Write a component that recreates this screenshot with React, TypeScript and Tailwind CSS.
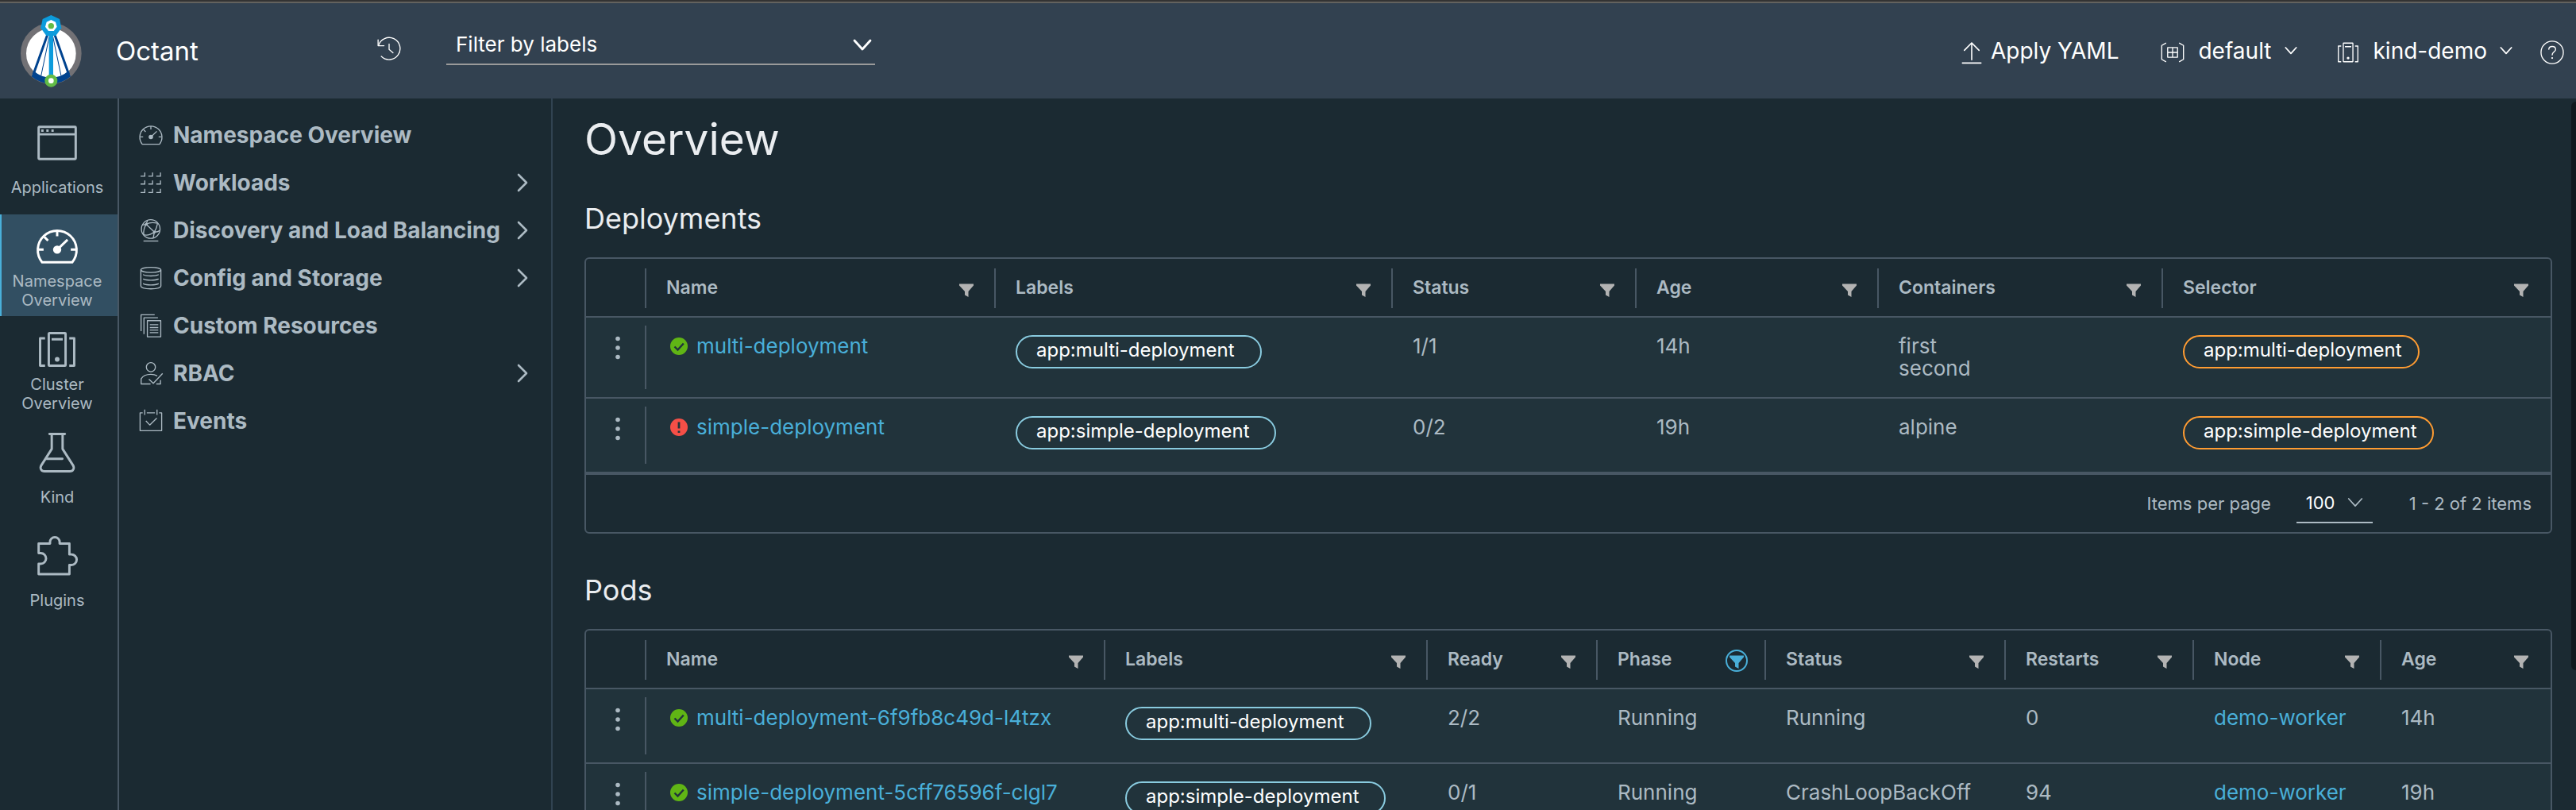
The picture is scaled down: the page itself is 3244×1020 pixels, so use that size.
import React, { type ReactNode } from "react";

type IconProps = { className?: string; stroke?: number };

function Icon({ className = "size-8", stroke = 1.5, children }: IconProps & { children: ReactNode }) {
  return (
    <svg
      viewBox="0 0 36 36"
      className={className}
      fill="none"
      stroke="currentColor"
      strokeWidth={stroke}
      strokeLinejoin="round"
      aria-hidden="true"
    >
      {children}
    </svg>
  );
}

const ApplicationIcon = (p: IconProps) => (
  <Icon {...p}>
    <rect x="3" y="5" width="30" height="26" rx="0.6" />
    <path d="M3 11H33" />
    <path d="M5.1 8h1.9M9.2 8h1.9M13.3 8h1.9" />
  </Icon>
);

const DashboardIcon = (p: IconProps) => (
  <Icon {...p}>
    <path d="M5.8 31H30.2A15.7 15.7 0 1 0 5.8 31Z" />
    <path d="M18 5.5V10M2.6 20.7H7M29 20.7H33.4M7.6 10.5L10.6 13.5M18 20.8L26.4 12.8" />
    <circle cx="18" cy="20.8" r="2.4" fill="currentColor" />
  </Icon>
);

const ClusterIcon = (p: IconProps) => (
  <Icon {...p}>
    <rect x="11.2" y="4.8" width="13.6" height="26.4" rx="0.5" />
    <path d="M13.5 9.8H22.5M8.2 9H4.2V31.2H8.2M27.8 9H31.8V31.2H27.8" />
    <circle cx="18" cy="26" r="1.9" fill="currentColor" stroke="none" />
  </Icon>
);

const FlaskIcon = (p: IconProps) => (
  <Icon {...p}>
    <path d="M11.8 2.9H24.2" strokeLinecap="round" />
    <path d="M13.6 3V15L5.2 28.2C3.8 30.6 5 33.1 7.8 33.1H28.2C31 33.1 32.2 30.6 30.8 28.2L22.4 15V3" />
    <path d="M9.2 23H22.2" strokeLinecap="round" />
  </Icon>
);

const PluginIcon = (p: IconProps) => (
  <Icon {...p}>
    <path d="M3 8H12.2V6.8A3.9 3.9 0 0 1 20 6.8V8H27.9V16.8H29.5A4.3 4.3 0 0 1 29.5 25.4H27.9V32.8H3V24.4H4.7A4.3 4.3 0 0 0 4.7 15.8H3Z" />
  </Icon>
);

const WorkloadsIcon = (p: IconProps) => (
  <Icon {...p}>
    {[8.9, 20, 31.9].map((y) =>
      [3.4, 14.4, 25.6].map((x) => <path key={`${x}-${y}`} d={`M${x} ${y}h6v-5.2`} strokeLinejoin="miter" />),
    )}
  </Icon>
);

const NetworkIcon = (p: IconProps) => (
  <Icon {...p}>
    <circle cx="17.8" cy="16.2" r="13.2" />
    <path d="M7.5 33.2H28.5" />
    <path d="M11.5 9.5C16 6.6 21.5 6.6 27.5 8M11.5 9.5C8.5 14 7.2 18 7.8 24.4M11.5 9.5L23 20.5M27.5 8C26.6 13 25 17.3 23 20.5M23 20.5C18 24 12 25.4 7.8 24.4M23 20.5C25.4 20.6 28.4 20 30.5 18.4M23 20.5L21.4 28.6M6 10.5L11.5 9.5L13 4.4" />
    <circle cx="11.5" cy="9.5" r="1.3" fill="currentColor" />
    <circle cx="23" cy="20.5" r="1.3" fill="currentColor" />
  </Icon>
);

const StorageIcon = (p: IconProps) => (
  <Icon {...p}>
    <ellipse cx="18" cy="6.6" rx="14.2" ry="3.7" />
    <path d="M3.8 6.6V29.6C3.8 31.8 10 33.5 18 33.5S32.2 31.8 32.2 29.6V6.6" />
    <path d="M7.5 13.5C10 14.7 13.8 15.2 18 15.2S26 14.7 28.5 13.5M7.5 19.6C10 20.8 13.8 21.3 18 21.3S26 20.8 28.5 19.6M7.5 26.2C10 27.4 13.8 27.9 18 27.9S26 27.4 28.5 26.2" strokeLinecap="round" />
  </Icon>
);

const ResourcesIcon = (p: IconProps) => (
  <Icon {...p}>
    <rect x="13" y="11" width="19" height="22.8" />
    <path d="M8.2 30V6.8H28M4.1 26V2.6H23.4M16.5 16.8H28.5M16.5 20.8H28.5M16.5 24.4H28.5M16.5 28H28.5" />
  </Icon>
);

const AssignUserIcon = (p: IconProps) => (
  <Icon {...p}>
    <circle cx="18" cy="9.4" r="6.4" />
    <path d="M17.5 33.2H4.2V26C6.6 21.6 12 19.6 18 19.6C21.6 19.6 24.6 20.4 27 21.8M25.6 33.2H31.6V27.5" />
    <path d="M15.2 26.4L21.4 32.4L34.6 18.2" />
  </Icon>
);

const EventIcon = (p: IconProps) => (
  <Icon {...p}>
    <path d="M6.4 6.7H2.7V31.9H33.3V6.7H29.6M12.2 6.7H23.8M9.3 2V9.6M26.7 2V9.6M10.9 18L16.4 23.8L26.4 14" />
  </Icon>
);

const HistoryIcon = (p: IconProps) => (
  <Icon {...p}>
    <path d="M7 28.2A15.6 15.6 0 1 0 3 12.8" strokeLinecap="round" />
    <path d="M2.4 4.6V13H10.8M18 10.6V18.4L23.6 23" strokeLinecap="round" />
  </Icon>
);

const UploadIcon = (p: IconProps) => (
  <Icon {...p}>
    <path d="M18 28.5V4.5M7.6 15L18 4.5L28.4 15M4.8 33H31.2" strokeLinecap="round" />
  </Icon>
);

const NamespaceIcon = (p: IconProps) => (
  <Icon {...p}>
    <path d="M8.8 4.6L2.6 8.2V27.8L8.8 31.4M27.2 4.6L33.4 8.2V27.8L27.2 31.4" />
    <path d="M11 11.2H25V24.8H11ZM18 11.2V24.8M11 18H25" />
  </Icon>
);

const HelpIcon = (p: IconProps) => (
  <Icon {...p}>
    <circle cx="18" cy="18" r="15.8" />
    <path d="M13.2 13.6C13.4 10.9 15.3 9.6 18 9.6C20.9 9.6 22.9 11.2 22.9 13.7C22.9 17.2 18 17.4 18 21.6" strokeLinecap="round" />
    <circle cx="18" cy="26" r="1.3" fill="currentColor" stroke="none" />
  </Icon>
);

function ChevronRight() {
  return (
    <svg viewBox="0 0 14 24" className="h-6 w-3.5" fill="none" stroke="currentColor" strokeWidth="2.6" strokeLinecap="round" strokeLinejoin="round" aria-hidden="true">
      <path d="M2 2L12 12L2 22" />
    </svg>
  );
}

function ChevronDown({ className, stroke = 2 }: { className: string; stroke?: number }) {
  return (
    <svg viewBox="0 0 24 24" className={className} fill="none" stroke="currentColor" strokeWidth={stroke} strokeLinecap="round" strokeLinejoin="round" aria-hidden="true">
      <path d="M2 6L12 17L22 6" />
    </svg>
  );
}

function FilterIcon({ active }: { active?: boolean }) {
  return (
    <svg viewBox="0 0 28 28" className={active ? "size-7 text-[#49afd9]" : "size-7 text-[#b3b3b3]"} aria-hidden="true">
      {active && <circle cx="14" cy="14" r="13" fill="none" stroke="currentColor" strokeWidth="2" />}
      <path d="M5 7.5H23V9.5L16.5 17V24L12 21.5V17L5 9.5Z" fill="currentColor" />
    </svg>
  );
}

function StatusIcon({ ok }: { ok: boolean }) {
  return (
    <svg viewBox="0 0 28 28" className="size-7 shrink-0" role="img" aria-label={ok ? "Healthy" : "Error"}>
      <circle cx="14" cy="14" r="11" fill={ok ? "#60b515" : "#f54f47"} />
      {ok ? (
        <path d="M8.5 14.5L12.5 18.5L19.8 10.5" fill="none" stroke="#21333b" strokeWidth="2.4" />
      ) : (
        <path d="M14 7.5V15.5M14 18.4V21" fill="none" stroke="#21333b" strokeWidth="2.8" />
      )}
    </svg>
  );
}

function Logo() {
  return (
    <svg viewBox="72 50 240 282" className="h-[94px] w-20" role="img" aria-label="Octant logo">
      <circle cx="193" cy="201" r="104.5" fill="#fff" stroke="#727175" strokeWidth="21" />
      <path d="M119 288A115 115 0 0 0 267 288L257 268A96 96 0 0 1 129 268Z" fill="#00438f" />
      <path d="M180 128L126 280M206 128L260 280" stroke="#00438f" strokeWidth="9" />
      <path d="M186 138L155 286M200 138L231 286" stroke="#00438f" strokeWidth="3" />
      <path d="M193 130V290" stroke="#0c9bdc" strokeWidth="16" />
      <path d="M193 56L225 71L232 105L211 134H175L154 105L161 71Z" fill="#0c9bdc" />
      <path d="M193 74L210 82L215 100L203 116H183L171 100L176 82Z" fill="#fff" />
      <circle cx="193" cy="97" r="11" fill="#62bb46" />
      <circle cx="193" cy="304" r="17" fill="#fff" stroke="#62bb46" strokeWidth="14" />
    </svg>
  );
}

const railItems = [
  { label: "Applications", icon: ApplicationIcon },
  { label: "Namespace Overview", icon: DashboardIcon, active: true },
  { label: "Cluster Overview", icon: ClusterIcon },
  { label: "Kind", icon: FlaskIcon },
  { label: "Plugins", icon: PluginIcon },
];

const navItems = [
  { label: "Namespace Overview", icon: DashboardIcon },
  { label: "Workloads", icon: WorkloadsIcon, more: true },
  { label: "Discovery and Load Balancing", icon: NetworkIcon, more: true },
  { label: "Config and Storage", icon: StorageIcon, more: true },
  { label: "Custom Resources", icon: ResourcesIcon },
  { label: "RBAC", icon: AssignUserIcon, more: true },
  { label: "Events", icon: EventIcon },
];

function Header() {
  return (
    <header className="flex h-[124px] shrink-0 items-center border-t-2 border-[#333333] bg-[#324150] text-white">
      <div className="flex h-full w-full items-center border-t-2 border-[#63625e]">
        <div className="flex w-[562px] shrink-0 items-center pr-14 pl-6">
          <Logo />
          <span className="ml-[42px] text-[33px] leading-10">Octant</span>
          <button type="button" aria-label="History" className="mb-1 ml-auto">
            <HistoryIcon />
          </button>
        </div>
        <div className="mb-4 flex h-[52px] w-[540px] items-center border-b-2 border-[#9a9a9a] pr-1 pl-3">
          <input
            type="text"
            aria-label="Filter by labels"
            placeholder="Filter by labels"
            className="h-full min-w-0 flex-1 bg-transparent text-[26px] outline-none placeholder:text-white placeholder:opacity-100"
          />
          <button type="button" aria-label="Show label filters" className="mt-1">
            <ChevronDown className="size-6" stroke={2.8} />
          </button>
        </div>
        <div className="ml-auto flex items-center gap-12 pr-3.5 text-[28px] leading-10">
          <button type="button" className="mr-1 flex items-center gap-2">
            <UploadIcon className="mt-1 size-8" stroke={1.8} />
            Apply YAML
          </button>
          <button type="button" aria-haspopup="listbox" className="flex items-center gap-4">
            <NamespaceIcon className="mt-1 size-8" />
            default
            <ChevronDown className="size-4" stroke={2.6} />
          </button>
          <div className="flex items-center gap-[34px]">
            <button type="button" aria-haspopup="listbox" className="flex items-center gap-4">
              <ClusterIcon className="mt-1 size-8" />
              kind-demo
              <ChevronDown className="size-4" stroke={2.6} />
            </button>
            <button type="button" aria-label="Help">
              <HelpIcon className="mt-1 size-8" />
            </button>
          </div>
        </div>
      </div>
    </header>
  );
}

function Rail() {
  return (
    <nav aria-label="Modules" className="flex w-[150px] shrink-0 flex-col gap-0.5 border-r-2 border-[#485764] pt-4">
      {railItems.map(({ label, icon: Glyph, active }) => (
        <a
          key={label}
          href="#"
          aria-current={active ? "page" : undefined}
          className={
            active
              ? "flex h-32 flex-col items-center border-l-2 border-[#49afd9] bg-[#324f62] pt-3 pr-1.5"
              : "flex h-32 flex-col items-center border-l-2 border-transparent pt-3 pr-1.5"
          }
        >
          <Glyph className={active ? "size-14 text-white" : "size-14"} stroke={1.9} />
          <span className="flex h-14 items-center text-center text-[20px] leading-6">{label}</span>
        </a>
      ))}
    </nav>
  );
}

function SideNav() {
  return (
    <nav aria-label="Namespace" className="w-[546px] shrink-0 border-r-2 border-[#314351] pt-4">
      {navItems.map(({ label, icon: Glyph, more }) => (
        <a key={label} href="#" className="flex h-[60px] items-center pr-[29px] pl-6 text-[28px] leading-8 font-bold">
          <Glyph />
          <span className="ml-3 flex-1 whitespace-nowrap">{label}</span>
          {more && <ChevronRight />}
        </a>
      ))}
    </nav>
  );
}

type Column = { title: string; width: string; filtered?: boolean };

function DataGrid({ title, columns, rows, footer }: { title: string; columns: Column[]; rows: ReactNode[][]; footer?: ReactNode }) {
  return (
    <section>
      <h2 className="mb-7 text-[36px] leading-[42px] text-[#eaedf0]">{title}</h2>
      <div className="overflow-hidden rounded-md border-2 border-[#485764]">
        <table className="w-full table-fixed border-separate border-spacing-0 text-left">
          <colgroup>
            <col className="w-[76px]" />
            {columns.map((c) => (
              <col key={c.title} className={c.width} />
            ))}
          </colgroup>
          <thead>
            <tr>
              <th aria-label="Actions" className="border-b-2 border-[#485764] bg-[linear-gradient(#485764,#485764)] bg-[length:2px_calc(100%-22px)] bg-[position:right_12px] bg-no-repeat" />
              {columns.map((c, i) => (
                <th
                  key={c.title}
                  scope="col"
                  className={
                    i < columns.length - 1
                      ? "h-[74px] border-b-2 border-[#485764] bg-[linear-gradient(#485764,#485764)] bg-[length:2px_calc(100%-22px)] bg-[position:right_12px] bg-no-repeat pr-[23px] pl-[25px]"
                      : "h-[74px] border-b-2 border-[#485764] pr-[23px] pl-[25px]"
                  }
                >
                  <div className="flex items-center justify-between text-[23px] leading-7 font-semibold">
                    {c.title}
                    <button type="button" aria-label={`Filter ${c.title}`} className="mt-1">
                      <FilterIcon active={c.filtered} />
                    </button>
                  </div>
                </th>
              ))}
            </tr>
          </thead>
          <tbody>
            {rows.map((cells, r) => (
              <tr key={r} className="bg-[#21333b]">
                <td className="border-b-2 border-[#485764] bg-[linear-gradient(#485764,#485764)] bg-[length:2px_calc(100%-20px)] bg-[position:right_10px] bg-no-repeat py-[22px] pl-[26px] align-top">
                  <button type="button" aria-label="Row actions" className="block">
                    <svg viewBox="0 0 28 32" className="h-8 w-7" fill="currentColor" aria-hidden="true">
                      <circle cx="14" cy="4.5" r="2.8" />
                      <circle cx="14" cy="16" r="2.8" />
                      <circle cx="14" cy="27.5" r="2.8" />
                    </svg>
                  </button>
                </td>
                {cells.map((cell, i) => (
                  <td key={i} className="border-b-2 border-[#485764] py-[22px] pr-6 pl-[25px] align-top text-[26px] leading-7 whitespace-nowrap">
                    {cell}
                  </td>
                ))}
              </tr>
            ))}
          </tbody>
        </table>
        {footer}
      </div>
    </section>
  );
}

function Link({ children }: { children: ReactNode }) {
  return (
    <a href="#" className="text-[#49afd9]">
      {children}
    </a>
  );
}

function Named({ name, ok = true }: { name: string; ok?: boolean }) {
  return (
    <div className="flex items-center gap-2 pl-0.5">
      <StatusIcon ok={ok} />
      <Link>{name}</Link>
    </div>
  );
}

function Pill({ text, selector }: { text: string; selector?: boolean }) {
  return (
    <span
      className={
        selector
          ? "mb-1.5 flex h-[42px] w-fit items-center rounded-full border-2 border-[#ff9c32] pr-5 pb-1 pl-6 text-[24px] leading-7 text-white"
          : "mb-1.5 flex h-[42px] w-fit items-center rounded-full border-2 border-[#89cbdf] pr-8 pb-1 pl-6 text-[24px] leading-7 text-white"
      }
    >
      {text}
    </span>
  );
}

const deploymentColumns: Column[] = [
  { title: "Name", width: "w-[440px]" },
  { title: "Labels", width: "w-[500px]" },
  { title: "Status", width: "w-[307px]" },
  { title: "Age", width: "w-[305px]" },
  { title: "Containers", width: "w-[358px]" },
  { title: "Selector", width: "w-[488px]" },
];

const podColumns: Column[] = [
  { title: "Name", width: "w-[578px]" },
  { title: "Labels", width: "w-[406px]" },
  { title: "Ready", width: "w-[214px]" },
  { title: "Phase", width: "w-[212px]", filtered: true },
  { title: "Status", width: "w-[302px]" },
  { title: "Restarts", width: "w-[237px]" },
  { title: "Node", width: "w-[236px]" },
  { title: "Age", width: "w-[213px]" },
];

const deploymentRows: ReactNode[][] = [
  [
    <Named name="multi-deployment" />,
    <Pill text="app:multi-deployment" />,
    "1/1",
    "14h",
    <>
      <div>first</div>
      <div>second</div>
    </>,
    <Pill text="app:multi-deployment" selector />,
  ],
  [
    <Named name="simple-deployment" ok={false} />,
    <Pill text="app:simple-deployment" />,
    "0/2",
    "19h",
    "alpine",
    <Pill text="app:simple-deployment" selector />,
  ],
];

const podRows: ReactNode[][] = [
  [
    <Named name="multi-deployment-6f9fb8c49d-l4tzx" />,
    <Pill text="app:multi-deployment" />,
    "2/2",
    "Running",
    "Running",
    "0",
    <Link>demo-worker</Link>,
    "14h",
  ],
  [
    <Named name="simple-deployment-5cff76596f-clgl7" />,
    <Pill text="app:simple-deployment" />,
    "0/1",
    "Running",
    "CrashLoopBackOff",
    "94",
    <Link>demo-worker</Link>,
    "19h",
  ],
];

function Pagination() {
  return (
    <div className="flex h-[74px] items-center justify-end border-t-2 border-[#485764] pr-6 text-[22px] leading-7">
      <label htmlFor="page-size">Items per page</label>
      <div className="relative mr-[46px] ml-8 flex h-[50px] w-24 items-center border-b-2 border-[#acbac3]">
        <select id="page-size" defaultValue="100" className="h-full w-full appearance-none bg-transparent pl-3 text-white outline-none">
          <option>10</option>
          <option>20</option>
          <option>50</option>
          <option>100</option>
        </select>
        <span className="pointer-events-none absolute right-3">
          <ChevronDown className="size-5" />
        </span>
      </div>
      <span>1 - 2 of 2 items</span>
    </div>
  );
}

export default function App() {
  return (
    <div className="flex h-screen flex-col overflow-hidden bg-[#1b2a32] font-['Inter',sans-serif] text-[#acbac3]">
      <Header />
      <div className="flex min-h-0 flex-1">
        <Rail />
        <SideNav />
        <main className="relative min-w-0 flex-1 overflow-hidden pt-5 pr-[30px] pl-10">
          <h1 className="mb-12 text-[55px] leading-[62px] text-[#eaedf0]">Overview</h1>
          <div className="flex flex-col gap-[50px]">
            <DataGrid title="Deployments" columns={deploymentColumns} rows={deploymentRows} footer={<Pagination />} />
            <DataGrid title="Pods" columns={podColumns} rows={podRows} />
          </div>
          <div aria-hidden="true" className="absolute top-1 right-0 h-[716px] w-1.5 rounded-l-md bg-[#10191e]" />
        </main>
      </div>
    </div>
  );
}
